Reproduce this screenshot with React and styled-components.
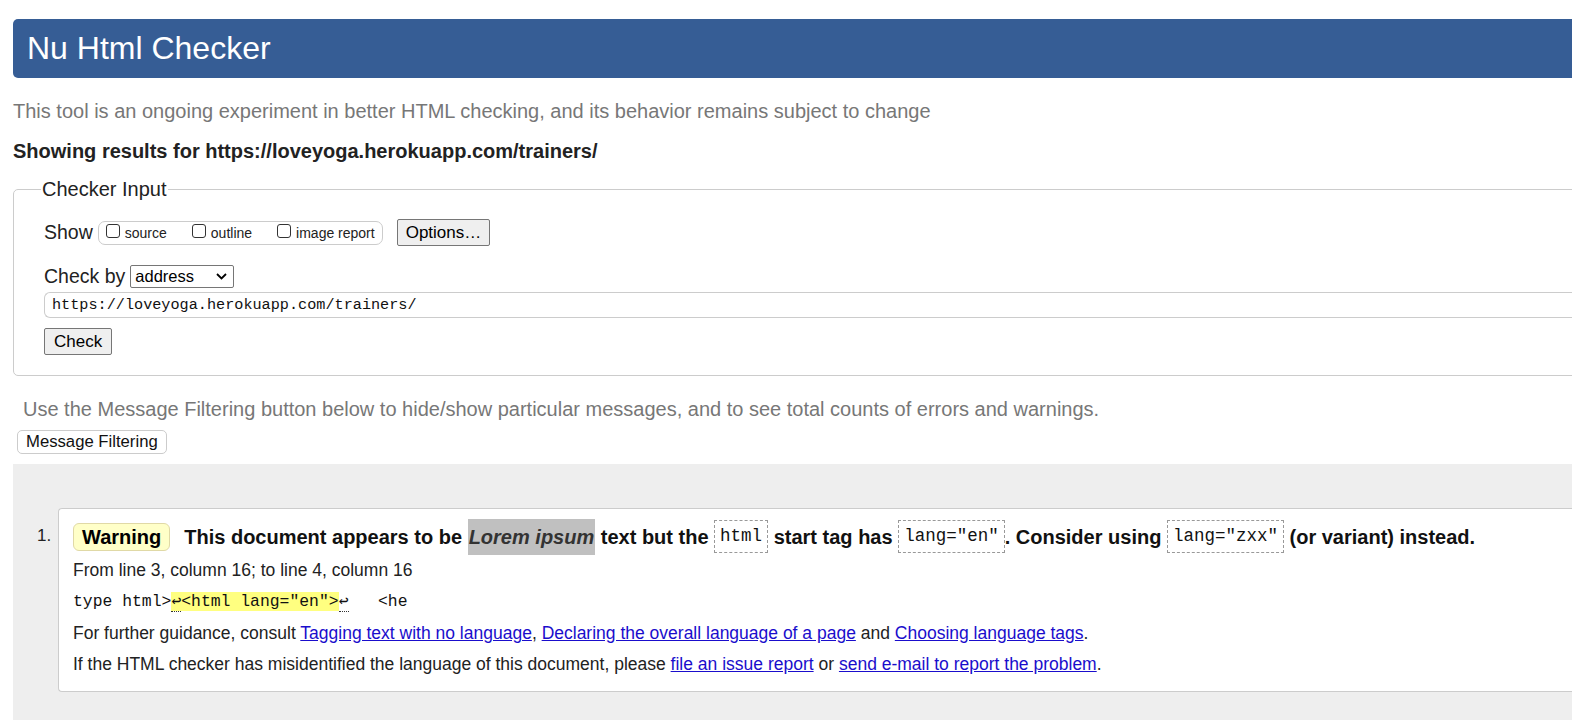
import React from "react";
import styled, { createGlobalStyle } from "styled-components";

const GlobalStyle = createGlobalStyle`
  html, body {
    margin: 0;
    padding: 0;
    background: #fff;
    overflow: hidden;
  }
  body {
    font-family: "Liberation Sans", Arial, sans-serif;
    color: #222;
  }
`;

const Page = styled.div`
  width: 1640px;
  padding: 19px 0 0 13px;
`;

const Header = styled.h1`
  margin: 0;
  height: 59px;
  background: #365d95;
  border-radius: 5px 0 0 5px;
  color: #fff;
  font-weight: normal;
  font-size: 32px;
  line-height: 59px;
  padding-left: 14px;
`;

const Intro = styled.p`
  margin: 22px 0 0 0;
  font-size: 20px;
  line-height: 22px;
  color: #777;
`;

const Showing = styled.p`
  margin: 18px 0 0 0;
  font-size: 20px;
  line-height: 22px;
  font-weight: bold;
  color: #222;
`;

const Fieldset = styled.fieldset`
  margin: 17px 0 0 0;
  padding: 6px 0 20px 30px;
  border: 1px solid #ccc;
  border-radius: 5px 0 0 5px;
`;

const Legend = styled.legend`
  font-size: 20px;
  color: #222;
  padding: 0 1px;
  margin-left: -3px;
  line-height: 20px;
`;

const Row = styled.div`
  display: flex;
  align-items: center;
  margin-top: ${(p) => p.top || 0}px;
`;

const Label = styled.span`
  font-size: 19.5px;
  color: #222;
  margin-right: 5px;
`;

const CheckGroup = styled.span`
  display: inline-flex;
  align-items: center;
  height: 22px;
  border: 1px solid #ccc;
  border-radius: 7px;
  padding: 0 7px 0 7px;
  gap: 25px;
`;

const CheckItem = styled.label`
  display: inline-flex;
  align-items: center;
  font-size: 14px;
  color: #222;
  gap: 5px;
`;

const Box = styled.span`
  width: 12px;
  height: 12px;
  border: 1px solid #333;
  border-radius: 3px;
  background: #fff;
  margin-top: -4px;
`;

const PlainButton = styled.button`
  font-family: "Liberation Sans", Arial, sans-serif;
  font-size: 17px;
  color: #000;
  background: #efefef;
  border: 1px solid #767676;
  border-radius: 2px;
  height: 27px;
  padding: 0 ${(p) => p.pad || 8}px;
  margin-left: ${(p) => p.left || 0}px;
`;

const SelectBox = styled.span`
  display: inline-flex;
  align-items: center;
  justify-content: space-between;
  width: 104px;
  height: 23px;
  box-sizing: border-box;
  border: 1px solid #767676;
  border-radius: 2px;
  padding: 0 6px 0 4px;
  font-size: 16.5px;
  color: #000;
`;

const UrlInput = styled.div`
  margin-top: 4px;
  height: 26px;
  box-sizing: border-box;
  border: 1px solid #ccc;
  border-right: none;
  border-radius: 6px 0 0 6px;
  padding-left: 7px;
  font-family: "Liberation Mono", "Courier New", monospace;
  font-size: 15.2px;
  line-height: 24px;
  color: #111;
`;

const Note = styled.p`
  margin: 22px 0 0 10px;
  font-size: 20px;
  line-height: 22px;
  color: #777;
`;

const FilterButton = styled.button`
  font-family: "Liberation Sans", Arial, sans-serif;
  margin: 10px 0 0 4px;
  height: 24px;
  font-size: 16.7px;
  color: #111;
  background: #fff;
  border: 1px solid #ccc;
  border-radius: 5px;
  padding: 0 8px;
`;

const Results = styled.div`
  margin-top: 10px;
  background: #eee;
  padding: 44px 0 40px 24px;
  height: 260px;
`;

const Item = styled.div`
  display: flex;
  align-items: flex-start;
`;

const Num = styled.span`
  font-size: 17px;
  color: #222;
  width: 21px;
  padding-top: 18px;
`;

const Card = styled.div`
  flex: 1;
  background: #fff;
  border: 1px solid #ccc;
  border-right: none;
  border-radius: 4px 0 0 4px;
  padding: 10px 0 17px 14px;
`;

const MessageLine = styled.div`
  display: flex;
  align-items: center;
  font-size: 20px;
  font-weight: bold;
  color: #111;
  height: 36px;
  white-space: pre;
`;

const Badge = styled.span`
  background: #ffffc8;
  border: 1px solid #e0d9a6;
  border-radius: 6px;
  padding: 0 8px;
  height: 26px;
  line-height: 26px;
  margin-right: 14px;
  color: #000;
`;

const Lorem = styled.em`
  background: #c0c0c0;
  color: #333;
  padding: 0 1px;
  height: 36px;
  line-height: 36px;
`;

const Code = styled.code`
  font-family: "Liberation Mono", "Courier New", monospace;
  font-weight: normal;
  font-size: 17.5px;
  color: #111;
  border: 1px dashed #999;
  padding: 0 5px;
  height: 31px;
  line-height: 31px;
  margin-top: -2px;
`;

const Text = styled.div`
  font-size: 17.5px;
  color: #222;
  line-height: 20px;
  margin-top: ${(p) => p.top || 0}px;
`;

const Extract = styled.div`
  font-family: "Liberation Mono", "Courier New", monospace;
  font-size: 16.4px;
  color: #111;
  line-height: 20px;
  margin-top: 12px;
  white-space: pre;
`;

const Mark = styled.span`
  background: #ffff80;
`;

const Ret = styled.span`
  border-bottom: 1px dotted #333;
`;

const Link = styled.a`
  color: #1a0dcc;
  text-decoration: underline;
`;

const Chevron = () => (
  <svg width="11" height="7" viewBox="0 0 11 7">
    <path d="M1 1l4.5 4.5L10 1" fill="none" stroke="#000" strokeWidth="1.8" />
  </svg>
);

const App = () => {
  return (
    <Page>
      <GlobalStyle />
      <Header>Nu Html Checker</Header>
      <Intro>
        This tool is an ongoing experiment in better HTML checking, and its
        behavior remains subject to change
      </Intro>
      <Showing>Showing results for https://loveyoga.herokuapp.com/trainers/</Showing>
      <Fieldset>
        <Legend>Checker Input</Legend>
        <Row top={14}>
          <Label>Show</Label>
          <CheckGroup>
            <CheckItem>
              <Box />
              source
            </CheckItem>
            <CheckItem>
              <Box />
              outline
            </CheckItem>
            <CheckItem>
              <Box />
              image report
            </CheckItem>
          </CheckGroup>
          <PlainButton left={14} pad={8}>
            Options…
          </PlainButton>
        </Row>
        <Row top={19}>
          <Label>Check by</Label>
          <SelectBox>
            address
            <Chevron />
          </SelectBox>
        </Row>
        <UrlInput>https://loveyoga.herokuapp.com/trainers/</UrlInput>
        <Row top={10}>
          <PlainButton pad={9}>Check</PlainButton>
        </Row>
      </Fieldset>
      <Note>
        Use the Message Filtering button below to hide/show particular messages,
        and to see total counts of errors and warnings.
      </Note>
      <FilterButton>Message Filtering</FilterButton>
      <Results>
        <Item>
          <Num>1.</Num>
          <Card>
            <MessageLine>
              <Badge>Warning</Badge>
              {"This document appears to be "}
              <Lorem>Lorem ipsum</Lorem>
              {" text but the "}
              <Code>html</Code>
              {" start tag has "}
              <Code>lang="en"</Code>
              {". Consider using "}
              <Code>lang="zxx"</Code>
              {" (or variant) instead."}
            </MessageLine>
            <Text top={5}>From line 3, column 16; to line 4, column 16</Text>
            <Extract>
              {"type html>"}
              <Mark>
                <Ret>↩</Ret>
                {'<html lang="en">'}
              </Mark>
              <Ret>↩</Ret>
              {"   <he"}
            </Extract>
            <Text top={11}>
              For further guidance, consult{" "}
              <Link href="#">Tagging text with no language</Link>,{" "}
              <Link href="#">Declaring the overall language of a page</Link> and{" "}
              <Link href="#">Choosing language tags</Link>.
            </Text>
            <Text top={11}>
              If the HTML checker has misidentified the language of this
              document, please <Link href="#">file an issue report</Link> or{" "}
              <Link href="#">send e-mail to report the problem</Link>.
            </Text>
          </Card>
        </Item>
      </Results>
    </Page>
  );
};

export default App;
